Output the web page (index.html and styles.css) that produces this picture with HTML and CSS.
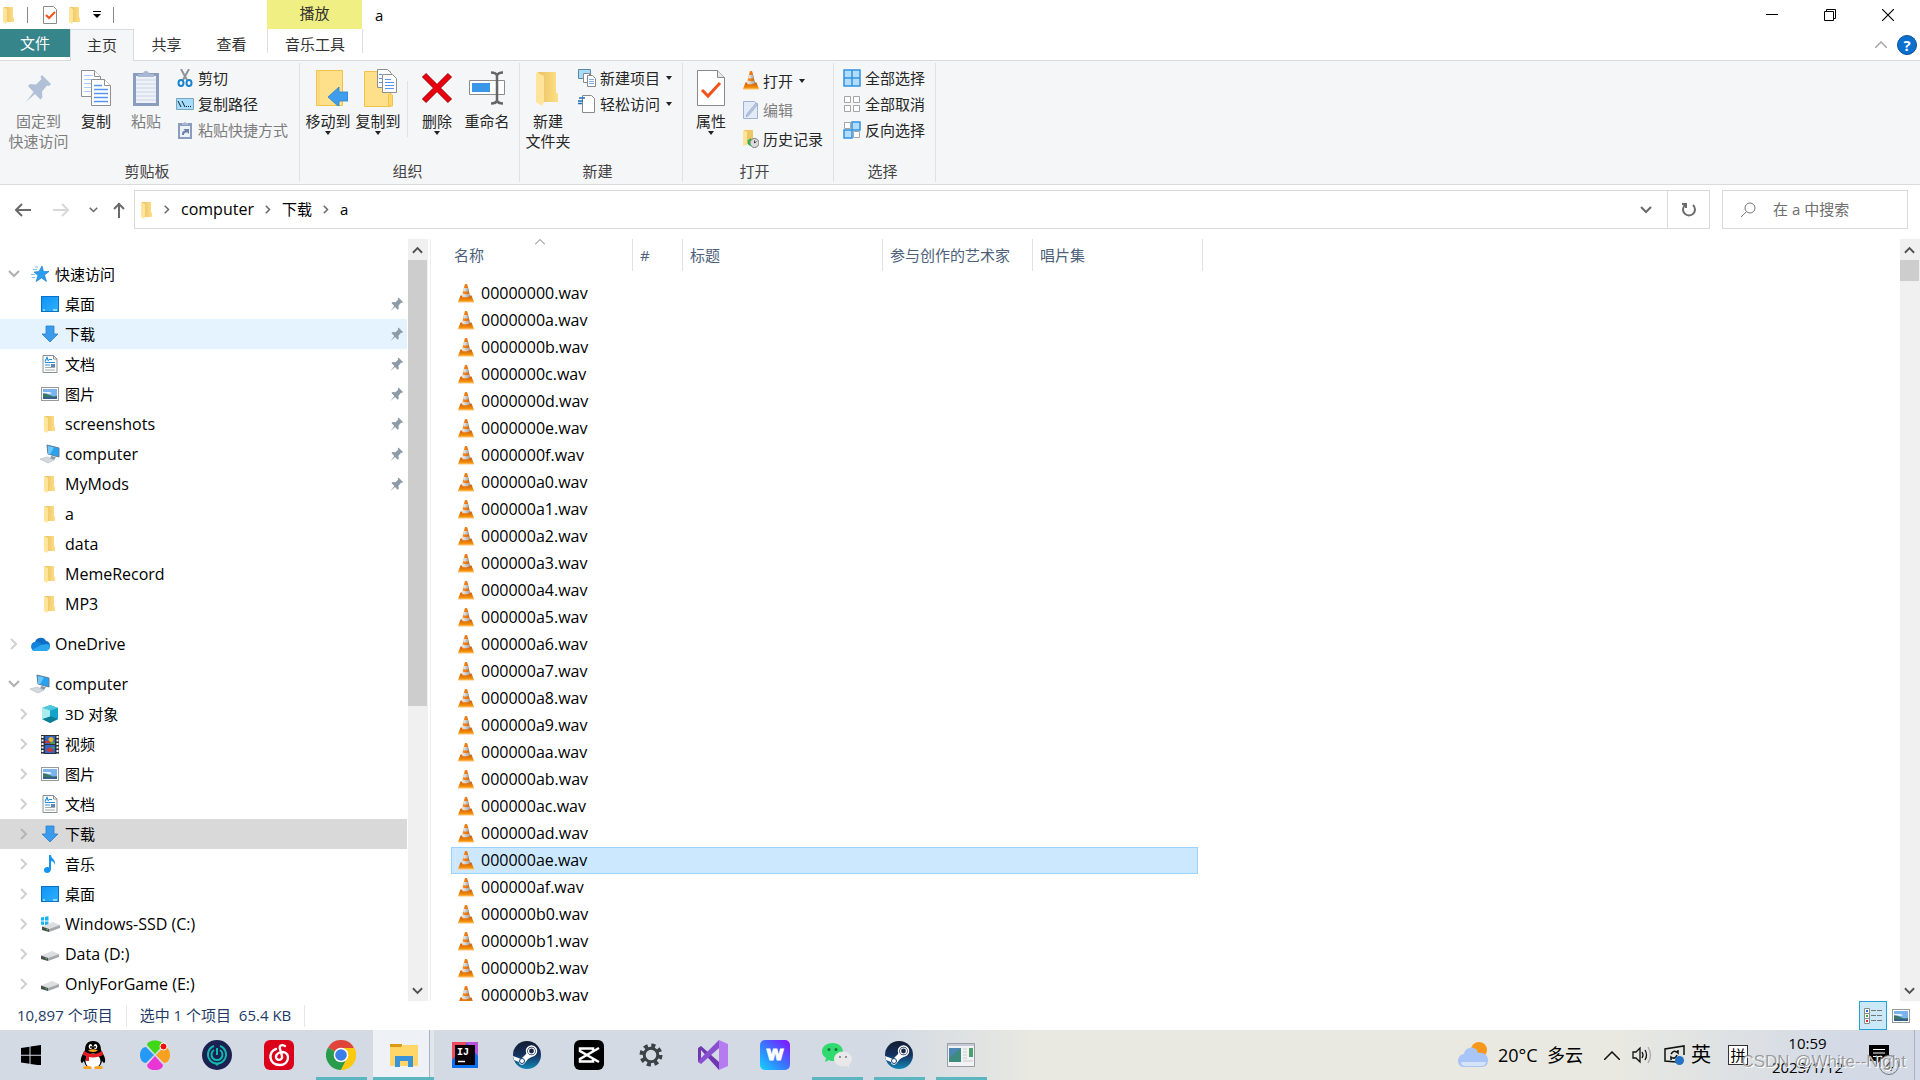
FILE: index.html
```
<!DOCTYPE html>
<html lang="zh-CN">
<head>
    <meta charset="UTF-8">
    <meta name="viewport" content="width=device-width, initial-scale=1.0">
    <title>a</title>
    <link rel="stylesheet" href="styles.css">
</head>
<body>
    <!-- Shared icons -->
    <svg class="sprite" width="0" height="0" aria-hidden="true">
        <defs>
            <linearGradient id="g-folder" x1="0" x2="1"><stop offset="0" stop-color="#e9c163"/><stop offset="1" stop-color="#ffdf85"/></linearGradient>
            <linearGradient id="g-desk" x1="0" x2="1" y2="1"><stop offset="0" stop-color="#0f93f5"/><stop offset="1" stop-color="#2fb0ff"/></linearGradient>
            <linearGradient id="g-cone" x1="0" x2="1"><stop offset="0" stop-color="#f59a3c"/><stop offset=".5" stop-color="#f07a10"/><stop offset="1" stop-color="#c95f08"/></linearGradient>
            <linearGradient id="g-base" x1="0" x2="0" y1="0" y2="1"><stop offset="0" stop-color="#c95508"/><stop offset="1" stop-color="#ffa20c"/></linearGradient>
            <linearGradient id="g-white" x1="0" x2="1"><stop offset="0" stop-color="#f2f2f2"/><stop offset="1" stop-color="#9fa3a6"/></linearGradient>
            <linearGradient id="g-steam" x1="0" x2="0" y1="0" y2="1"><stop offset="0" stop-color="#111b2f"/><stop offset=".5" stop-color="#16335f"/><stop offset="1" stop-color="#1387b8"/></linearGradient>
        </defs>
        <symbol id="folder" viewBox="0 0 12 18">
            <path d="M1 1h9v10l1 1v4H2z" fill="url(#g-folder)"/>
            <path d="M0 1l4 2v13l-1 2-3-2z" fill="#ffe49a"/>
        </symbol>
        <symbol id="cone" viewBox="0 0 16 19">
            <path d="M2.500 11.500h11L16 18H0z" fill="url(#g-base)"/>
            <path d="M0 17.500h16v1H0z" fill="#ffc27a"/>
            <path d="M8 0c.8 0 1.200.4 1.400 1L12.300 13c-2 1.800-6.600 1.800-8.600 0L6.600 1C6.800.4 7.200 0 8 0z" fill="url(#g-cone)"/>
            <path d="M6 4h4l.8 3c-1.500.8-4.100.8-5.600 0z" fill="url(#g-white)"/>
            <path d="M4.600 9.500c2 1 4.800 1 6.800 0l.6 2.700c-2.200 1.300-5.800 1.300-8 0z" fill="url(#g-white)"/>
        </symbol>
        <symbol id="pin" viewBox="0 0 14 16">
            <path d="M8.500 1.500L13 6l-1 1-1-.3-2.500 3 .2 3-1 1L5 11l-4.500 4 3.800-5L1.500 7l1-1 3 .2 2.800-2.700-.6-1z"/>
        </symbol>
        <symbol id="desktop" viewBox="0 0 18 16">
            <rect x=".5" y=".5" width="17" height="15" fill="url(#g-desk)" stroke="#0873c4"/>
            <path d="M2 14h2m8 0h4" stroke="#fff"/>
        </symbol>
        <symbol id="download" viewBox="0 0 16 18">
            <path d="M4 1h8v8h4l-8 8-8-8h4z" fill="#3a9aec" stroke="#2a7fcb" stroke-width=".8"/>
        </symbol>
        <symbol id="document" viewBox="0 0 16 18">
            <path d="M1 .5h10.500L15 4v13.500H1z" fill="#fff" stroke="#8b8f92"/>
            <path d="M11.500.5V4H15" fill="none" stroke="#8b8f92"/>
            <path d="M3 6.500l2-4 1.500 3.500M7 4.500h3M3 7.500h10M3 10h5" stroke="#1e8fd8" fill="none" stroke-width="1.200"/>
            <path d="M3 12.500h10M3 15h10" stroke="#a6a9ab"/>
            <rect x="9" y="9" width="4" height="3" fill="#5b86b5"/>
        </symbol>
        <symbol id="picture" viewBox="0 0 18 14">
            <rect x=".5" y=".5" width="17" height="13" fill="#fff" stroke="#97999b"/>
            <rect x="2" y="2" width="14" height="10" fill="#79b4ee"/>
            <path d="M2 5l6 0 3 1-2 1-7-1z" fill="#eef6fd"/>
            <path d="M2 6.500c4 0 7 2 10 3l4-.5v1H2z" fill="#3c7561"/>
            <path d="M2 10h14v2H2z" fill="#33638c"/>
        </symbol>
        <symbol id="pc" viewBox="0 0 20 20">
            <path d="M7 1l12 3v9L8 10z" fill="#27a1f0" stroke="#5f7c91"/>
            <path d="M8 2l6 1.500-4 7-2-.7z" fill="#6cc6fb"/>
            <path d="M11 12l5 1-2 3-4-1z" fill="#8d9aa5"/>
            <path d="M0 15l7-2 7 3-6 3z" fill="#d3d9de" stroke="#b2bac0" stroke-width=".6"/>
        </symbol>
        <symbol id="cube" viewBox="0 0 18 20">
            <path d="M1 4l8-3v18l-8-4z" fill="#8be0ea"/>
            <path d="M9 1l8 3v11l-8 4z" fill="#12a5cc"/>
            <path d="M1 4l8-3 8 3-8 2.500z" fill="#4fc6dc"/>
            <path d="M1 15l8-3 8 3-8 4z" fill="#0b7d96"/>
            <path d="M1 4l8 2.500v6L1 15z" fill="#a9ecf0"/>
        </symbol>
        <symbol id="film" viewBox="0 0 18 19">
            <path d="M0 0h18v19H0z" fill="#2d3036"/>
            <path d="M1.500 1v18M16.500 1v18" stroke="#fff" stroke-width="2" stroke-dasharray="2 1.500"/>
            <path d="M4 1h10v8H4zM4 10h10v8H4z" fill="#3565c8"/>
            <circle cx="10" cy="4.500" r="2.500" fill="#e2b62c"/>
            <path d="M4 6h4l3 2H4zM5 15l4-3 4 4-5 1z" fill="#c93a32"/>
            <path d="M10 7h4v2H9zM9 12h4v2z" fill="#47a04b"/>
        </symbol>
        <symbol id="music" viewBox="0 0 14 20">
            <path d="M6 1h2c0 4 5 4 4 10-1-3-2-4-4-4v8c0 5-7 5-7 1.500C1 13 4 12.500 6 13.500z" fill="#1494ee"/>
        </symbol>
        <symbol id="drive" viewBox="0 0 18 10">
            <path d="M0 4.500L11 0l7 3L7 7z" fill="#dcdedf"/>
            <path d="M0 4.500L7 7v3L0 8z" fill="#494d4f"/>
            <path d="M18 3L7 7v3l11-4z" fill="#a4a8aa"/>
            <path d="M4.500 7.500l1.500.5" stroke="#3fe04e"/>
        </symbol>
        <symbol id="windrive" viewBox="0 0 20 16">
            <path d="M1 1.500l3-.5v3.500H1zM5 .8L8.500.3v4.200H5zM1 5.500h3V9l-3-.5zM5 5.500h3.500v4L5 9z" fill="#12b2f3"/>
            <svg x="2" y="6" width="18" height="10" viewBox="0 0 18 10"><use href="#drive"/></svg>
        </symbol>
        <symbol id="cloud" viewBox="0 0 20 16">
            <path d="M5 6a6 6 0 0 1 11-1 5 5 0 0 1 4 5 5 5 0 0 1-5 5H5A4.600 4.600 0 0 1 5 6z" fill="#0f6cc4"/>
            <path d="M5 6c2-.5 4 0 5 1l8 5.500c-1 2-2 2.500-3 2.500H5A4.600 4.600 0 0 1 5 6z" fill="#1384dc"/>
            <path d="M2 14l9-5 5-1c2 0 4 1 4 3a5 5 0 0 1-5 4H5c-1.500 0-2.500-.5-3-1z" fill="#2aa7ee"/>
        </symbol>
        <symbol id="star" viewBox="0 0 18 18">
            <path d="M11 1l1.500 5.500H18L13.500 10l2 6.500-5-3.500L5 16.500 7 10.500 3 7l5-.5z" fill="#2a9df0" stroke="#1b82cf" stroke-width=".7"/>
            <path d="M4 2h3M2 4.500h4M0 9.500h4M1 12.500h3" stroke="#7cc0ee"/>
        </symbol>
        <symbol id="down" viewBox="0 0 12 8"><path d="M1 1l5 5 5-5" fill="none" stroke="currentColor" stroke-width="2"/></symbol>
        <symbol id="right" viewBox="0 0 8 12"><path d="M1 1l5 5-5 5" fill="none" stroke="currentColor" stroke-width="2"/></symbol>
        <symbol id="up" viewBox="0 0 12 8"><path d="M1 7l5-5 5 5" fill="none" stroke="currentColor" stroke-width="2"/></symbol>
        <symbol id="steam" viewBox="0 0 28 28">
            <circle cx="14" cy="14" r="14" fill="url(#g-steam)"/>
            <path d="M0 15l8 3 6-6 8 2-7 4-4 5c-3 2-5 0-5-2L1 19z" fill="#fff"/>
            <circle cx="18.500" cy="10" r="5" fill="#16284c" stroke="#fff" stroke-width="1.500"/>
            <circle cx="18.500" cy="10" r="3" fill="none" stroke="#fff" stroke-width="1.200"/>
            <circle cx="9" cy="20" r="2.500" fill="none" stroke="#16406e" stroke-width="1"/>
        </symbol>
        <symbol id="check-page" viewBox="0 0 28 36">
            <path d="M.5.5h20l7 7v28H.5z" fill="#fff" stroke="#8a8a8a"/>
            <path d="M20.500.5v7h7" fill="#e8e8e8" stroke="#8a8a8a"/>
            <path d="M5 20l6 6 12-13" fill="none" stroke="#f0531c" stroke-width="3"/>
        </symbol>
    </svg>

    <div class="window">
        <!-- Title bar -->
        <header class="titlebar">
            <div class="quick">
                <svg width="12" height="18"><use href="#folder"/></svg>
                <span class="bar"></span>
                <button aria-label="属性"><svg width="14" height="18" viewBox="0 0 14 18"><path d="M.5.5h10l3 3v14H.5z" fill="#fff" stroke="#8a8a8a"/><path d="M3 9l3 3 6-6" fill="none" stroke="#f0531c" stroke-width="2"/></svg></button>
                <button aria-label="新建文件夹"><svg width="12" height="18"><use href="#folder"/></svg></button>
                <button aria-label="自定义快速访问工具栏"><svg width="8" height="8"><path d="M0 .5h8" stroke="#000"/><path d="M0 3h8L4 7z"/></svg></button>
                <span class="bar"></span>
            </div>
            <div class="context-tab">播放</div>
            <h1>a</h1>
            <div class="controls">
                <button aria-label="最小化"><svg width="12" height="12"><path d="M0 5.500h12" stroke="#000"/></svg></button>
                <button aria-label="还原"><svg width="12" height="12" fill="none" stroke="#000"><path d="M.5 2.500h9v9h-9zM2.500 2.500v-2h9v9h-2"/></svg></button>
                <button aria-label="关闭"><svg width="12" height="12"><path d="M0 0l12 12M12 0L0 12" stroke="#000" stroke-width="1.200"/></svg></button>
            </div>
        </header>

        <nav class="tabs">
            <button class="file">文件</button>
            <button class="active">主页</button>
            <button>共享</button>
            <button>查看</button>
            <button class="music">音乐工具</button>
            <div class="tab-end">
                <button aria-label="折叠功能区"><svg width="12" height="7" fill="none" stroke="#a8a8a8" stroke-width="1.500"><path d="M0 7l6-6 6 6"/></svg></button>
                <button class="help" aria-label="帮助">?</button>
            </div>
        </nav>

        <!-- Ribbon -->
        <div class="ribbon">
            <section class="group clipboard">
                <div class="group-body">
                    <button class="big wide disabled"><span class="pic"><svg width="32" height="32" fill="#b1c0d6"><use href="#pin"/></svg></span>固定到<br>快速访问</button>
                    <button class="big"><span class="pic"><svg width="32" height="36" viewBox="0 0 32 36" fill="#fff" stroke="#8f8f8f"><path d="M1.500.5h13l6 6v20h-19z"/><path d="M14.500.5v6h6" /><path d="M4 5.500h9M4 9.500h14M4 13.500h14M4 17.500h14M4 21.500h14" stroke="#a9cbfb"/><path d="M11.500 9.500h13l6 6v20h-19z"/><path d="M24.500 9.500v6h6"/><path d="M14 15.500h8M14 19.500h14M14 23.500h14M14 27.500h14M14 31.500h14" stroke="#5595f5" stroke-width="1.300"/></svg></span>复制</button>
                    <button class="big disabled"><span class="pic"><svg width="26" height="36" viewBox="0 0 26 36"><path d="M0 3h26v33H0z" fill="#8b9dbe"/><path d="M3 6h20v27H3z" fill="#eef1f7"/><path d="M3 10h20M3 14h20M3 18h20M3 22h20M3 26h20M3 30h20" stroke="#ccd4e2"/><path d="M5 7V4h5a3 3 0 0 1 6 0h5v3z" fill="#a9b8d2"/></svg></span>粘贴</button>
                    <div class="stack">
                        <button><svg width="18" height="18" viewBox="0 0 18 18"><path d="M5 0l6 11M13 0L7 11" stroke="#8d949a" stroke-width="2"/><ellipse cx="5" cy="14" rx="2.500" ry="3" fill="none" stroke="#1b83c9" stroke-width="2"/><ellipse cx="13" cy="14" rx="2.500" ry="3" fill="none" stroke="#1b83c9" stroke-width="2"/></svg>剪切</button>
                        <button><svg width="18" height="12" viewBox="0 0 18 12"><path d="M.5.5h17v11H.5z" fill="#a5dcfa" stroke="#7aa5c0"/><path d="M2 3l3 6M6 3l3 6" stroke="#123"/><path d="M10 8.500h6" stroke="#123" stroke-dasharray="1 1"/></svg>复制路径</button>
                        <button class="disabled"><svg width="18" height="18" viewBox="0 0 18 18"><path d="M2 2h14v16H2z" fill="#8b9dbe"/><path d="M4 5h10v11H4z" fill="#eef1f7"/><path d="M6 4V2h2a1 1 0 0 1 2 0h2v2z" fill="#a9b8d2"/><path d="M6 14c0-4 1-4 3-4L7.500 8H13v5l-1.500-1.500C9 11.500 8 12 8 14z" fill="#6c83ab"/></svg>粘贴快捷方式</button>
                    </div>
                </div>
                <h2>剪贴板</h2>
            </section>

            <section class="group organize">
                <div class="group-body">
                    <button class="big"><span class="pic"><svg width="40" height="36" viewBox="-8 0 40 36"><path d="M.5.5h26v35H.5z" fill="#ffe08a" stroke="#efc34c"/><path d="M3 .5v35" stroke="#f6d070"/><path d="M12 27l11-10v5h9v9h-9v6z" fill="#3f9ded" stroke="#2a80cc" stroke-width=".8"/></svg></span>移动到<i class="caret"></i></button>
                    <button class="big"><span class="pic"><svg width="40" height="38" viewBox="-6 0 40 38"><path d="M.5 2.500h26v35H.5z" fill="#ffe08a" stroke="#efc34c"/><path d="M24.500 37V26q2-3 4 0v11z" fill="#ffd76e" stroke="#efc34c"/><g fill="#fff" stroke="#8f8f8f"><path d="M13.500.5h10l4 4v14h-14z"/><path d="M18.500 5.500h10l4 4v14h-14z"/></g><path d="M21 10.500h6M21 13.500h9M21 16.500h9M21 19.500h9M15 5.500h3M15 9.500h3M15 13.500h3" stroke="#5595f5"/></svg></span>复制到<i class="caret"></i></button>
                    <span class="rule"></span>
                    <button class="big"><span class="pic"><svg width="32" height="32" viewBox="0 0 32 32"><path d="M3 3l26 26M29 3L3 29" stroke="#a11018" stroke-width="6"/><path d="M3.500 3.500l25 25M28.500 3.500l-25 25" stroke="#e8000f" stroke-width="4.500"/></svg></span>删除<i class="caret"></i></button>
                    <button class="big"><span class="pic"><svg width="36" height="34" viewBox="0 0 36 34"><path d="M.5 9.500h35v14H.5z" fill="#fff" stroke="#8c8c8c"/><path d="M3 12h18v9H3z" fill="#3a97e8"/><path d="M22 1.500q5 0 6 3 1-3 6-3M28 4v26M22 32.500q5 0 6-3 1 3 6 3" fill="none" stroke="#666" stroke-width="2.500"/></svg></span>重命名</button>
                </div>
                <h2>组织</h2>
            </section>

            <section class="group create">
                <div class="group-body">
                    <button class="big"><span class="pic"><svg width="24" height="36"><use href="#folder"/></svg></span>新建<br>文件夹</button>
                    <div class="stack">
                        <button><svg width="18" height="18" viewBox="0 0 18 18"><path d="M.5.5h12v9H.5z" fill="#a5dcfa" stroke="#5a87a3"/><path d="M5.500 4.500h6v9h-6z" fill="#fff" stroke="#8a8a8a"/><path d="M9.500 6.500h5l3 3v8h-8z" fill="#fff" stroke="#8a8a8a"/><path d="M11 10.500h5M11 12.500h5M11 14.500h5" stroke="#7faef2"/></svg>新建项目<i class="caret"></i></button>
                        <button><svg width="18" height="18" viewBox="0 0 18 18"><path d="M4.500.5h9l3 3v14h-12z" fill="#fff" stroke="#8a8a8a"/><path d="M1 3h6M0 6h5M0 8.500h4" stroke="#1e6fb8" stroke-width="1.500"/></svg>轻松访问<i class="caret"></i></button>
                    </div>
                </div>
                <h2>新建</h2>
            </section>

            <section class="group open-with">
                <div class="group-body">
                    <button class="big"><span class="pic"><svg width="28" height="36"><use href="#check-page"/></svg></span>属性<i class="caret"></i></button>
                    <div class="stack loose">
                        <button><svg width="16" height="19"><use href="#cone"/></svg>打开<i class="caret"></i></button>
                        <button class="disabled"><svg width="16" height="18" viewBox="0 0 16 18"><path d="M.5.5h11l3 3v14H.5z" fill="#e3ebf8" stroke="#9fb2d3"/><path d="M15 3L6 14l-3 2 1-3 9-11z" fill="#b7c6e0" stroke="#8ea3c7" stroke-width=".7"/></svg>编辑</button>
                        <button><svg width="16" height="18" viewBox="0 0 16 18"><path d="M1 0h9v14H1z" fill="#edc766"/><path d="M0 0l4 2v13l-4 1z" fill="#ffe49a"/><circle cx="11.500" cy="13" r="4.500" fill="#dcdcdc" stroke="#777"/><path d="M11.500 10.500V13l2-1.500" stroke="#444" fill="none"/><path d="M4 11l4-3v2c-2 1-2 4 1 6-4 0-5-3-4-5z" fill="#22b14c"/></svg>历史记录</button>
                    </div>
                </div>
                <h2>打开</h2>
            </section>

            <section class="group">
                <div class="group-body">
                    <div class="stack select">
                        <button><svg width="18" height="18" fill="#b3dcfb" stroke="#2f93e0" stroke-width="1.500"><path d="M1 1h8v8H1zM9 1h8v8H9zM1 9h8v8H1zM9 9h8v8H9z"/></svg>全部选择</button>
                        <button><svg width="18" height="18" fill="#fff" stroke="#a5a5a5"><path d="M1.500 1.500h6v6h-6zM10.500 1.500h6v6h-6zM1.500 10.500h6v6h-6zM10.500 10.500h6v6h-6z"/></svg>全部取消</button>
                        <button><svg width="18" height="18" fill="#fff" stroke="#a5a5a5"><path d="M1.500 1.500h6v6h-6zM10.500 10.500h6v6h-6z"/><path d="M9 1h8v8H9zM1 9h8v8H1z" fill="#b3dcfb" stroke="#2f93e0" stroke-width="1.500"/></svg>反向选择</button>
                    </div>
                </div>
                <h2>选择</h2>
            </section>
        </div>

        <!-- Address bar -->
        <div class="navbar">
            <div class="history">
                <button aria-label="返回"><svg width="16" height="14" fill="none" stroke="#6a6a6a" stroke-width="2"><path d="M16 7H1M7 1L1 7l6 6"/></svg></button>
                <button aria-label="前进"><svg width="16" height="14" fill="none" stroke="#d8d8d8" stroke-width="2"><path d="M0 7h15M9 1l6 6-6 6"/></svg></button>
                <button class="small" aria-label="最近浏览的位置"><svg width="9" height="6"><use href="#down"/></svg></button>
                <button class="small" aria-label="上移"><svg width="12" height="16" fill="none" stroke="#6a6a6a" stroke-width="2"><path d="M6 16V1M1 7l5-5 5 5"/></svg></button>
            </div>
            <div class="address">
                <svg width="12" height="18"><use href="#folder"/></svg>
                <svg class="sep" width="6" height="9"><use href="#right"/></svg>
                <a class="latin" href="#">computer</a>
                <svg class="sep" width="6" height="9"><use href="#right"/></svg>
                <a href="#">下载</a>
                <svg class="sep" width="6" height="9"><use href="#right"/></svg>
                <a href="#">a</a>
                <button class="drop" aria-label="以前的位置"><svg width="12" height="8"><use href="#down"/></svg></button>
                <button class="refresh" aria-label="刷新"><svg width="16" height="16" fill="none" stroke="#6a6a6a" stroke-width="2"><path d="M12 3a6 6 0 1 1-8 0"/><path d="M1 2h4v4"/></svg></button>
            </div>
            <label class="search">
                <svg width="16" height="16" fill="none" stroke="#757575"><circle cx="10" cy="6" r="5"/><path d="M6.500 9.500L1 15"/></svg>
                <input type="text" placeholder="在 a 中搜索" aria-label="在 a 中搜索">
            </label>
        </div>

        <!-- Folder tree and file list -->
        <main class="panes">
            <nav class="tree">
                <ul>
                    <li class="root"><svg class="arrow expanded" width="12" height="8"><use href="#down"/></svg><span class="ico"><svg width="18" height="18"><use href="#star"/></svg></span><a href="#">快速访问</a></li>
                    <li><span class="ico"><svg width="18" height="16"><use href="#desktop"/></svg></span><a href="#">桌面</a><svg class="pin" width="14" height="16"><use href="#pin"/></svg></li>
                    <li class="hover"><span class="ico"><svg width="16" height="18"><use href="#download"/></svg></span><a href="#">下载</a><svg class="pin" width="14" height="16"><use href="#pin"/></svg></li>
                    <li><span class="ico"><svg width="16" height="18"><use href="#document"/></svg></span><a href="#">文档</a><svg class="pin" width="14" height="16"><use href="#pin"/></svg></li>
                    <li><span class="ico"><svg width="18" height="14"><use href="#picture"/></svg></span><a href="#">图片</a><svg class="pin" width="14" height="16"><use href="#pin"/></svg></li>
                    <li><span class="ico"><svg width="12" height="18"><use href="#folder"/></svg></span><a class="latin" href="#">screenshots</a><svg class="pin" width="14" height="16"><use href="#pin"/></svg></li>
                    <li><span class="ico"><svg width="20" height="20"><use href="#pc"/></svg></span><a class="latin" href="#">computer</a><svg class="pin" width="14" height="16"><use href="#pin"/></svg></li>
                    <li><span class="ico"><svg width="12" height="18"><use href="#folder"/></svg></span><a class="latin" href="#">MyMods</a><svg class="pin" width="14" height="16"><use href="#pin"/></svg></li>
                    <li><span class="ico"><svg width="12" height="18"><use href="#folder"/></svg></span><a class="latin" href="#">a</a></li>
                    <li><span class="ico"><svg width="12" height="18"><use href="#folder"/></svg></span><a class="latin" href="#">data</a></li>
                    <li><span class="ico"><svg width="12" height="18"><use href="#folder"/></svg></span><a class="latin" href="#">MemeRecord</a></li>
                    <li><span class="ico"><svg width="12" height="18"><use href="#folder"/></svg></span><a class="latin" href="#">MP3</a></li>
                    <li class="root gap"><svg class="arrow" width="8" height="14"><use href="#right"/></svg><span class="ico"><svg width="20" height="16"><use href="#cloud"/></svg></span><a class="latin" href="#">OneDrive</a></li>
                    <li class="root gap"><svg class="arrow expanded" width="12" height="8"><use href="#down"/></svg><span class="ico"><svg width="20" height="20"><use href="#pc"/></svg></span><a class="latin" href="#">computer</a></li>
                    <li><svg class="arrow" width="8" height="14"><use href="#right"/></svg><span class="ico"><svg width="18" height="20"><use href="#cube"/></svg></span><a href="#">3D 对象</a></li>
                    <li><svg class="arrow" width="8" height="14"><use href="#right"/></svg><span class="ico"><svg width="18" height="19"><use href="#film"/></svg></span><a href="#">视频</a></li>
                    <li><svg class="arrow" width="8" height="14"><use href="#right"/></svg><span class="ico"><svg width="18" height="14"><use href="#picture"/></svg></span><a href="#">图片</a></li>
                    <li><svg class="arrow" width="8" height="14"><use href="#right"/></svg><span class="ico"><svg width="16" height="18"><use href="#document"/></svg></span><a href="#">文档</a></li>
                    <li class="current"><svg class="arrow" width="8" height="14"><use href="#right"/></svg><span class="ico"><svg width="16" height="18"><use href="#download"/></svg></span><a href="#">下载</a></li>
                    <li><svg class="arrow" width="8" height="14"><use href="#right"/></svg><span class="ico"><svg width="14" height="20"><use href="#music"/></svg></span><a href="#">音乐</a></li>
                    <li><svg class="arrow" width="8" height="14"><use href="#right"/></svg><span class="ico"><svg width="18" height="16"><use href="#desktop"/></svg></span><a href="#">桌面</a></li>
                    <li><svg class="arrow" width="8" height="14"><use href="#right"/></svg><span class="ico"><svg width="20" height="16"><use href="#windrive"/></svg></span><a class="latin" href="#">Windows-SSD (C:)</a></li>
                    <li><svg class="arrow" width="8" height="14"><use href="#right"/></svg><span class="ico low"><svg width="18" height="10"><use href="#drive"/></svg></span><a class="latin" href="#">Data (D:)</a></li>
                    <li><svg class="arrow" width="8" height="14"><use href="#right"/></svg><span class="ico low"><svg width="18" height="10"><use href="#drive"/></svg></span><a class="latin" href="#">OnlyForGame (E:)</a></li>
                </ul>
            </nav>
            <div class="scrollbar">
                <button aria-label="向上"><svg width="11" height="8"><use href="#up"/></svg></button>
                <div class="track"><div class="thumb tree-thumb"></div></div>
                <button aria-label="向下"><svg width="11" height="8"><use href="#down"/></svg></button>
            </div>

            <div class="files">
                <table>
                    <colgroup><col class="c-name"><col class="c-num"><col class="c-title"><col class="c-artist"><col class="c-album"><col class="c-rest"></colgroup>
                    <thead>
                        <tr>
                            <th>名称<svg class="sort" width="10" height="6" fill="none" stroke="#777"><path d="M0 5.500l5-5 5 5"/></svg></th>
                            <th>#</th>
                            <th>标题</th>
                            <th>参与创作的艺术家</th>
                            <th colspan="2">唱片集</th>
                        </tr>
                    </thead>
                    <tbody>
                        <tr><td><svg width="16" height="19"><use href="#cone"/></svg>00000000.wav</td><td colspan="4"></td></tr>
                        <tr><td><svg width="16" height="19"><use href="#cone"/></svg>0000000a.wav</td><td colspan="4"></td></tr>
                        <tr><td><svg width="16" height="19"><use href="#cone"/></svg>0000000b.wav</td><td colspan="4"></td></tr>
                        <tr><td><svg width="16" height="19"><use href="#cone"/></svg>0000000c.wav</td><td colspan="4"></td></tr>
                        <tr><td><svg width="16" height="19"><use href="#cone"/></svg>0000000d.wav</td><td colspan="4"></td></tr>
                        <tr><td><svg width="16" height="19"><use href="#cone"/></svg>0000000e.wav</td><td colspan="4"></td></tr>
                        <tr><td><svg width="16" height="19"><use href="#cone"/></svg>0000000f.wav</td><td colspan="4"></td></tr>
                        <tr><td><svg width="16" height="19"><use href="#cone"/></svg>000000a0.wav</td><td colspan="4"></td></tr>
                        <tr><td><svg width="16" height="19"><use href="#cone"/></svg>000000a1.wav</td><td colspan="4"></td></tr>
                        <tr><td><svg width="16" height="19"><use href="#cone"/></svg>000000a2.wav</td><td colspan="4"></td></tr>
                        <tr><td><svg width="16" height="19"><use href="#cone"/></svg>000000a3.wav</td><td colspan="4"></td></tr>
                        <tr><td><svg width="16" height="19"><use href="#cone"/></svg>000000a4.wav</td><td colspan="4"></td></tr>
                        <tr><td><svg width="16" height="19"><use href="#cone"/></svg>000000a5.wav</td><td colspan="4"></td></tr>
                        <tr><td><svg width="16" height="19"><use href="#cone"/></svg>000000a6.wav</td><td colspan="4"></td></tr>
                        <tr><td><svg width="16" height="19"><use href="#cone"/></svg>000000a7.wav</td><td colspan="4"></td></tr>
                        <tr><td><svg width="16" height="19"><use href="#cone"/></svg>000000a8.wav</td><td colspan="4"></td></tr>
                        <tr><td><svg width="16" height="19"><use href="#cone"/></svg>000000a9.wav</td><td colspan="4"></td></tr>
                        <tr><td><svg width="16" height="19"><use href="#cone"/></svg>000000aa.wav</td><td colspan="4"></td></tr>
                        <tr><td><svg width="16" height="19"><use href="#cone"/></svg>000000ab.wav</td><td colspan="4"></td></tr>
                        <tr><td><svg width="16" height="19"><use href="#cone"/></svg>000000ac.wav</td><td colspan="4"></td></tr>
                        <tr><td><svg width="16" height="19"><use href="#cone"/></svg>000000ad.wav</td><td colspan="4"></td></tr>
                        <tr class="selected"><td><svg width="16" height="19"><use href="#cone"/></svg>000000ae.wav</td><td colspan="4"></td></tr>
                        <tr><td><svg width="16" height="19"><use href="#cone"/></svg>000000af.wav</td><td colspan="4"></td></tr>
                        <tr><td><svg width="16" height="19"><use href="#cone"/></svg>000000b0.wav</td><td colspan="4"></td></tr>
                        <tr><td><svg width="16" height="19"><use href="#cone"/></svg>000000b1.wav</td><td colspan="4"></td></tr>
                        <tr><td><svg width="16" height="19"><use href="#cone"/></svg>000000b2.wav</td><td colspan="4"></td></tr>
                        <tr><td><svg width="16" height="19"><use href="#cone"/></svg>000000b3.wav</td><td colspan="4"></td></tr>
                    </tbody>
                </table>
            </div>
            <div class="scrollbar">
                <button aria-label="向上"><svg width="11" height="8"><use href="#up"/></svg></button>
                <div class="track"><div class="thumb file-thumb"></div></div>
                <button aria-label="向下"><svg width="11" height="8"><use href="#down"/></svg></button>
            </div>
        </main>

        <footer class="status">
            <span>10,897 个项目</span>
            <span>选中 1 个项目&nbsp; 65.4 KB</span>
            <div class="views">
                <button class="on" aria-label="详细信息"><svg width="18" height="16" viewBox="0 0 18 16"><path d="M.5.5h5v5h-5zM.5 5.500h5v5h-5zM.5 10.500h5v5h-5z" fill="#fff" stroke="#8a8a8a"/><path d="M2 3h2" stroke="#27c" stroke-width="2"/><path d="M2 8h2" stroke="#4a4" stroke-width="2"/><path d="M2 13h2" stroke="#c33" stroke-width="2"/><path d="M7 2.500h5M13 2.500h5M7 7.500h5M13 7.500h5M7 12.500h5M13 12.500h5" stroke="#777"/></svg></button>
                <button aria-label="大缩略图"><svg width="18" height="14"><use href="#picture"/></svg></button>
            </div>
        </footer>
    </div>

    <!-- Taskbar -->
    <div class="taskbar">
        <button aria-label="开始"><svg width="20" height="20" viewBox="0 0 20 20"><path d="M0 3l8.500-1.300v8H0zM9.500 1.500L20 0v9.700H9.500zM0 10.700h8.500v8L0 17.500zM9.500 10.700H20V20.500L9.500 19z"/></svg></button>
        <button aria-label="QQ"><svg width="26" height="30" viewBox="0 0 26 30"><path d="M13 1c6 0 8 4 8 9 2 4 5 8 4 12-1 2-2 0-3-1-1 5-4 7-9 7s-8-2-9-7c-1 1-2 3-3 1-1-4 2-8 4-12 0-5 2-9 8-9z"/><ellipse cx="13" cy="21" rx="7.500" ry="7.500" fill="#fff"/><path d="M4 11c6 4 12 4 18 0l1 4c-4 2-9 3-14 2v4H6v-5l-3-1z" fill="#e51c23"/><ellipse cx="10.500" cy="6.500" rx="1.800" ry="2.500" fill="#fff"/><ellipse cx="15.500" cy="6.500" rx="1.800" ry="2.500" fill="#fff"/><circle cx="11" cy="7" r="1"/><circle cx="15" cy="7" r="1"/><path d="M8 10.500q5-2.500 10 0-5 3-10 0zM3 27q5-2 9 0l-1 2H4zM14 27q5-2 9 0l-1 2h-7z" fill="#fba31c"/></svg></button>
        <button aria-label="应用"><svg width="30" height="30" viewBox="0 0 30 30"><path d="M15 14L7 5c0-6 16-6 16 0z" fill="#3fd816"/><path d="M14 15L6 23c-8 0-8-16 0-16z" fill="#2599f5"/><path d="M16 15l8-8c8 0 8 16 0 16z" fill="#f9a01f"/><path d="M15 16l8 9c0 7-16 7-16 0z" fill="#ea35d6"/><circle cx="23.500" cy="6.500" r="3.500" fill="#f50a0a" stroke="#fff"/></svg></button>
        <button aria-label="安全"><svg width="30" height="30" viewBox="0 0 30 30"><circle cx="15" cy="15" r="15" fill="#1b2150"/><g fill="none" stroke="#12b8ad" stroke-width="2"><path d="M12 6a9 9 0 1 0 6 0"/><path d="M12 10a5.500 5.500 0 1 0 6 0"/><path d="M15 8v7"/></g><path d="M12 23h6l-3 3z" fill="#12b8ad"/></svg></button>
        <button aria-label="网易云音乐"><svg width="30" height="30" viewBox="0 0 30 30"><rect width="30" height="30" rx="6" fill="#dd001b"/><path d="M21 6c-4-2-6 0-5 3l2 7c1 5-6 5-6 1 0-3 3-5 7-5 8 1 6 13-3 13-12 0-12-14-4-16" fill="none" stroke="#fff" stroke-width="2.400" stroke-linecap="round"/></svg></button>
        <button class="running" aria-label="Chrome"><svg width="30" height="30" viewBox="0 0 30 30"><path d="M15 15L2 7.500A15 15 0 0 1 28 7.500z" fill="#e0453a"/><path d="M15 15L28 7.500A15 15 0 0 1 15 30l0 0 5-12z" fill="#fdc90f"/><path d="M15 15l5 5-5 10A15 15 0 0 1 2 7.500z" fill="#289c4b"/><path d="M15 8h13l-5 7zM8 17L2 7.500z" fill="#e0453a"/><path d="M15 8h13.300A15 15 0 0 1 15 30l6-11z" fill="#fdc90f"/><circle cx="15" cy="15" r="7.300" fill="#fff"/><circle cx="15" cy="15" r="5.800" fill="#3b7de9"/></svg></button>
        <button class="running focused" aria-label="文件资源管理器"><svg width="28" height="24" viewBox="0 0 28 24"><path d="M0 1h12v5H0z" fill="#dc9a12"/><path d="M0 4h11l2-2h15v21H0z" fill="#ffd667"/><path d="M5 13h18v11h-5v-6h-8v6H5z" fill="#3a93d8"/></svg></button>
        <button aria-label="IntelliJ IDEA"><svg width="26" height="26" viewBox="0 0 26 26"><path d="M0 0h26v26H0z" fill="#0b6ff0"/><path d="M0 0h16L0 18z" fill="#ef4b5f"/><path d="M26 0v14L14 0z" fill="#b553e0"/><path d="M3 3h20v20H3z" fill="#0c0008"/><text x="5" y="13" class="ij">IJ</text><path d="M6 19.500h7" stroke="#fff" stroke-width="1.500"/></svg></button>
        <button aria-label="Steam"><svg width="28" height="28"><use href="#steam"/></svg></button>
        <button aria-label="剪映"><svg width="30" height="30" viewBox="0 0 30 30"><rect width="30" height="30" rx="6"/><path d="M25 8L6 19v2.500h13V18M25 22L6 11V8.500h13V12" fill="none" stroke="#fff" stroke-width="2.500"/></svg></button>
        <button aria-label="设置"><svg width="24" height="24" viewBox="0 0 24 24"><circle cx="12" cy="12" r="9.500" fill="none" stroke="#3d4247" stroke-width="4" stroke-dasharray="4 3.460"/><circle cx="12" cy="12" r="6.800" fill="none" stroke="#3d4247" stroke-width="3"/></svg></button>
        <button aria-label="Visual Studio"><svg width="30" height="30" viewBox="0 0 30 30"><path d="M21 0l9 4v22l-9 4z" fill="#b57cf0"/><path d="M0 8l3-2 18 16v8L3 10v10l-3 2z" fill="#7038b0"/><path d="M0 22l3 2L21 8V0L3 18z" fill="#8a4fd0"/></svg></button>
        <button aria-label="万兴"><svg width="30" height="30" viewBox="0 0 30 30"><defs><linearGradient id="g-w" x1="0" y1="1" x2="1" y2="0"><stop offset="0" stop-color="#12d3ff"/><stop offset=".5" stop-color="#3b73ff"/><stop offset="1" stop-color="#8a0cff"/></linearGradient></defs><rect width="30" height="30" rx="5" fill="url(#g-w)"/><text x="15" y="20" class="w-mark">w</text></svg></button>
        <button class="running" aria-label="微信"><svg width="30" height="25" viewBox="0 0 30 25"><path d="M10.500 0C17 0 21 4 21 9c-5 0-9 3-9 9-2 0-4 0-5-1l-4 2 1-4C1 13 0 11 0 8.500 0 4 4 0 10.500 0z" fill="#2fdb6f"/><ellipse cx="21" cy="16" rx="9" ry="7.500" fill="#e9e9e9"/><path d="M24 22l3 3v-5z" fill="#e9e9e9"/><circle cx="7" cy="6.500" r="1.500" fill="#17713a"/><circle cx="14" cy="6.500" r="1.500" fill="#17713a"/><circle cx="18" cy="14" r="1" fill="#777"/><circle cx="24" cy="14" r="1" fill="#777"/></svg></button>
        <button class="running" aria-label="Steam 窗口"><svg width="28" height="28"><use href="#steam"/></svg></button>
        <button class="running" aria-label="控制台"><svg width="28" height="24" viewBox="0 0 28 24"><path d="M.5.5h27v23H.5z" fill="#f2f2f4" stroke="#9a9da3"/><path d="M1 1h26v2H1z" fill="#c3cad6"/><path d="M2 5h12v14H2z" fill="#3d8a7e"/><path d="M2 5h12L2 15z" fill="#4b86b4"/><path d="M22 5h4v9h-4z" fill="#4ba06f"/><path d="M16 6h4M16 9h4M16 12h4M16 15h4M16 18h10" stroke="#c9c9cc"/></svg></button>

        <div class="tray">
            <button class="weather"><svg width="30" height="26" viewBox="0 0 30 26"><circle cx="21" cy="8" r="8" fill="#f7981d"/><path d="M6 12c1-8 13-8 14-1 6-1 10 3 10 7 0 5-3 7-6 7H6c-8 0-8-12 0-13z" fill="#a9c5f7"/><path d="M3 20h25c-1 3-2 4-5 4H7c-3 0-4-2-4-4z" fill="#d5e3fb"/></svg>20°C&nbsp; 多云</button>
            <button aria-label="显示隐藏的图标"><svg width="16" height="9" fill="none" stroke="#111" stroke-width="1.500"><path d="M0 9l8-8 8 8"/></svg></button>
            <button aria-label="音量"><svg width="20" height="18" fill="none" stroke="#111" stroke-width="1.300"><path d="M1 6h3l4-4v14l-4-4H1zM10 6q2 3 0 6M13 4q3 5 0 10"/><path d="M16 1q5 8 0 16" stroke="#aaa"/></svg></button>
            <button aria-label="网络"><svg width="21" height="20" fill="none" stroke="#111" stroke-width="1.500"><path d="M12 17l-11-1V4l19-3v9"/><path d="M7 9q3-5 7-1V5M13 10q-2 5-6 2v3"/><circle cx="15.500" cy="15.500" r="4.500" fill="#2672c4" stroke="none"/></svg></button>
            <button class="lang">英</button>
            <button class="ime">拼</button>
            <button class="clock"><span>10:59</span><span>2023/1/12</span></button>
            <button class="notice" aria-label="4 个新通知"><svg width="20" height="21" viewBox="0 0 20 21"><path d="M0 0h20v16h-9l-4 4v-4H0z"/><path d="M4 4.500h12M4 8h12M4 11.500h8" stroke="#fff" stroke-width="1.200"/></svg><span class="badge">4</span></button>
            <span class="watermark">CSDN @White--Night</span>
        </div>
    </div>
</body>
</html>
```
FILE: styles.css
```
* {
    box-sizing: border-box;
}
body {
    display: flex;
    flex-direction: column;
    height: 100vh;
    margin: 0;
    overflow: hidden;
    background-color: #fff;
    color: #000;
    font-family: "Open Sans", "Noto Sans CJK SC", sans-serif;
    font-size: 15px;
    line-height: 20px;
}
button {
    display: flex;
    align-items: center;
    justify-content: center;
    padding: 0;
    border: none;
    background: none;
    color: inherit;
    font: inherit;
    white-space: nowrap;
}
a {
    color: inherit;
    text-decoration: none;
}
svg {
    display: block;
    flex: none;
}
h1, h2 {
    margin: 0;
    font-size: 15px;
    font-weight: normal;
}
.sprite {
    position: absolute;
}
.latin {
    font-size: 16px;
}
.window {
    display: flex;
    flex: 1;
    flex-direction: column;
    min-height: 0;
}

/* Title bar */
.titlebar {
    display: flex;
    align-items: center;
    height: 29px;
}
.quick {
    display: flex;
    align-items: center;
    gap: 12px;
    width: 267px;
    padding-left: 3px;
}
.quick .bar {
    width: 1px;
    height: 16px;
    margin-right: 3px;
    background-color: #888;
}
.context-tab {
    width: 95px;
    height: 29px;
    padding-top: 3px;
    background-color: #f0ef83;
    color: #333;
    text-align: center;
}
.titlebar h1 {
    margin-left: 13px;
}
.controls {
    display: flex;
    margin-left: auto;
    margin-right: 3px;
}
.controls button {
    width: 58px;
    height: 28px;
}

/* Ribbon tabs */
.tabs {
    display: flex;
    height: 32px;
    border-bottom: 1px solid #d9dbdc;
    color: #333;
}
.tabs > button {
    width: 65px;
    padding-bottom: 2px;
}
.tabs .file {
    width: 70px;
    height: 28px;
    padding-bottom: 0;
    background-color: #35858b;
    color: #fff;
}
.tabs .active {
    width: 64px;
    height: 32px;
    border: 1px solid #d9dbdc;
    border-bottom: none;
    background-color: #f5f6f8;
}
.tabs .music {
    width: 96px;
    height: 24px;
    margin-left: 3px;
    padding-top: 7px;
    border-left: 1px solid #ddd;
    border-right: 1px solid #ddd;
}
.tab-end {
    display: flex;
    align-items: center;
    gap: 10px;
    margin-left: auto;
    padding-right: 3px;
}
.help {
    width: 20px;
    height: 20px;
    border: 1px solid #0d4f92;
    border-radius: 50%;
    background-color: #0b6fd0;
    color: #fff;
    font-weight: bold;
}

/* Ribbon */
.ribbon {
    display: flex;
    height: 124px;
    padding: 2px 0;
    border-bottom: 1px solid #d9dbdc;
    background-color: #f5f6f8;
    color: #262626;
}
.group {
    display: flex;
    flex-direction: column;
    justify-content: space-between;
    padding: 0 10px 1px 6px;
    border-right: 1px solid #dfe1e3;
}
.group-body {
    display: flex;
    align-items: flex-start;
}
.group h2 {
    color: #444;
    text-align: center;
}
.clipboard {
    padding-right: 11px;
}
.organize {
    padding-right: 7px;
    padding-left: 3px;
}
.create {
    padding-left: 3px;
}
.open-with {
    padding-left: 3px;
}
.big {
    flex-direction: column;
    justify-content: flex-start;
    width: 50px;
    padding-top: 4px;
}
.wide {
    width: 65px;
}
.big .pic {
    display: flex;
    align-items: center;
    justify-content: center;
    height: 42px;
    margin-bottom: 2px;
}
.disabled {
    color: #7d7d7d;
}
.caret {
    width: 0;
    height: 0;
    border: 3px solid transparent;
    border-top: 4px solid #222;
    border-bottom: none;
}
.rule {
    width: 1px;
    height: 56px;
    margin: 18px 4px 0;
    background-color: #dfe1e3;
}
.stack {
    display: flex;
    flex-direction: column;
    align-items: flex-start;
    padding: 2px 0 0 5px;
}
.stack button {
    gap: 4px;
    height: 26px;
}
.stack .caret {
    margin-left: 2px;
}
.loose {
    padding-top: 3px;
    padding-left: 7px;
}
.loose button {
    height: 29px;
}
.select {
    padding-left: 3px;
}

/* Address bar */
.navbar {
    display: flex;
    height: 54px;
    padding: 5px 12px 10px 0;
    color: #000;
}
.history {
    display: flex;
    width: 134px;
    padding-left: 4px;
    color: #6a6a6a;
}
.history button {
    width: 38px;
}
.history .small {
    width: 26px;
}
.address {
    display: flex;
    flex: 1;
    align-items: center;
    padding-left: 6px;
    border: 1px solid #d9d9d9;
}
.address a {
    padding-bottom: 2px;
}
.address .sep {
    margin: 0 11px;
    color: #6a6a6a;
}
.address .drop {
    width: 42px;
    height: 100%;
    margin-left: auto;
    color: #6a6a6a;
}
.address .refresh {
    width: 42px;
    height: 100%;
    border-left: 1px solid #d9d9d9;
}
.search {
    display: flex;
    align-items: center;
    width: 186px;
    margin-left: 12px;
    padding-left: 17px;
    border: 1px solid #d9d9d9;
}
.search input {
    width: 140px;
    padding: 0 0 2px 17px;
    border: none;
    background: none;
    font: inherit;
}
.search input::placeholder {
    color: #6d6d6d;
}

/* Panes */
.panes {
    display: flex;
    flex: 1;
    min-height: 0;
}
.tree {
    width: 408px;
    overflow: hidden;
}
.tree ul {
    margin: 0;
    padding: 20px 1px 0 0;
    list-style: none;
}
.tree li {
    position: relative;
    display: flex;
    align-items: center;
    height: 30px;
    padding-left: 40px;
}
.tree li.root {
    padding-left: 30px;
}
.tree li.gap {
    margin: 10px 0;
}
.tree li.gap + li.gap {
    margin-bottom: 0;
}
.tree .hover {
    background-color: #e5f3ff;
}
.tree .current {
    background-color: #d9d9d9;
}
/* expander sits in the indent of the row */
.tree .arrow {
    position: absolute;
    left: 20px;
    color: #d0d0d0;
}
.tree .current .arrow {
    color: #b5b5b5;
}
.tree .root .arrow {
    left: 10px;
}
.tree .root .expanded {
    left: 8px;
    color: #b0b0b0;
}
.ico {
    display: flex;
    align-items: center;
    justify-content: center;
    width: 20px;
    margin-right: 5px;
}
.ico.low {
    padding-top: 4px;
}
.pin {
    margin-left: auto;
    margin-right: 3px;
    fill: #8d9ba8;
}
.scrollbar {
    display: flex;
    flex-direction: column;
    width: 20px;
    background-color: #f0f0f0;
    color: #505050;
}
.scrollbar button {
    width: 19px;
    height: 21px;
}
.track {
    flex: 1;
}
.thumb {
    width: 19px;
    background-color: #cdcdcd;
}
.tree-thumb {
    height: 62%;
}
.file-thumb {
    height: 21px;
}
.files {
    flex: 1;
    min-width: 0;
    margin-left: 2px;
    padding-left: 20px;
    border-left: 1px solid #eee;
    overflow: hidden;
}

/* File list */
.files table {
    width: 752px;
    table-layout: fixed;
    border-spacing: 0;
    font-size: 16px;
}
.c-name {
    width: 182px;
}
.c-num {
    width: 50px;
}
.c-title {
    width: 200px;
}
.c-artist {
    width: 150px;
}
.c-album {
    width: 165px;
}
.c-rest {
    width: 5px;
}
.files th {
    position: relative;
    height: 32px;
    padding: 0 0 1px 7px;
    border-right: 1px solid #e2e2e2;
    color: #4c607a;
    font-size: 15px;
    font-weight: normal;
    text-align: left;
}
.files th:first-child {
    padding-left: 3px;
}
.sort {
    position: absolute;
    top: 0;
    left: 84px;
}
.files tbody::before {
    content: "";
    display: block;
    height: 9px;
}
.files td {
    height: 27px;
    padding: 0 0 2px 7px;
    border: 1px solid transparent;
    border-width: 1px 0;
}
.files td svg {
    display: inline-block;
    margin-right: 7px;
    vertical-align: -4px;
}
.selected td {
    border-color: #99d1ff;
    background-color: #cce8ff;
}
.selected td:first-child {
    box-shadow: inset 1px 0 #99d1ff;
}
.selected td:last-child {
    border-right-width: 1px;
}

/* Status bar */
.status {
    display: flex;
    align-items: center;
    height: 29px;
    padding-left: 17px;
    color: #1e3a66;
}
.status span {
    margin-right: 13px;
    padding: 0 13px 2px 0;
    border-right: 1px solid #e8e8e8;
}
.views {
    display: flex;
    margin-left: auto;
    padding-right: 5px;
}
.views button {
    width: 28px;
    height: 29px;
}
.views .on {
    border: 1px solid #26a0da;
    background-color: #cbe8f6;
}

/* Taskbar */
.taskbar {
    display: flex;
    height: 50px;
    background: linear-gradient(to right, #d3dae4 46%, #e9e9e1 54%, #e9e9e1 84%, #d3dae6 96%);
}
.taskbar > button {
    position: relative;
    width: 62px;
}
.running::after {
    content: "";
    position: absolute;
    right: 5px;
    bottom: 0;
    left: 6px;
    height: 3px;
    background-color: #5cb6bf;
}
.focused {
    border-left: 1px solid transparent;
    background: linear-gradient(to right, #eef2f6 56px, #a9b3bf 56px, #a9b3bf 57px, #dfe6ec 57px) padding-box;
}
.focused::after {
    right: 0;
    left: 0;
}
.ij {
    fill: #fff;
    font: bold 10px "Liberation Mono", monospace;
}
.w-mark {
    fill: #fff;
    stroke: #fff;
    font: bold 20px "Open Sans", sans-serif;
    text-anchor: middle;
}
.tray {
    position: relative;
    display: flex;
    align-items: center;
    margin-left: auto;
    padding-right: 5px;
}
.tray::after {
    content: "";
    position: absolute;
    right: 5px;
    width: 1px;
    height: 50px;
    background-color: #aab2bf;
}
.tray button {
    height: 50px;
    margin-right: 12px;
}
.tray .weather {
    gap: 10px;
    margin-right: 21px;
    font-size: 18px;
}
.tray .lang {
    margin-right: 17px;
    margin-left: -6px;
    font-size: 20px;
}
.tray .ime {
    width: 20px;
    height: 20px;
    margin-right: 24px;
    border: 1px solid #333;
    background-color: #fff;
}
.tray .clock {
    flex-direction: column;
    margin-right: 26px;
    line-height: 24px;
}
.tray .notice {
    position: relative;
    margin-right: 26px;
}
.badge {
    position: absolute;
    top: 25px;
    left: 10px;
    width: 20px;
    height: 20px;
    border: 1px solid #777;
    border-radius: 50%;
    background-color: #d3dae6;
    line-height: 18px;
}
.watermark {
    position: absolute;
    right: 14px;
    bottom: 8px;
    color: rgba(120, 120, 120, 0.7);
    font-family: "Liberation Sans", sans-serif;
    font-size: 17px;
    white-space: nowrap;
    text-shadow: 1px 1px #fff;
}
```
